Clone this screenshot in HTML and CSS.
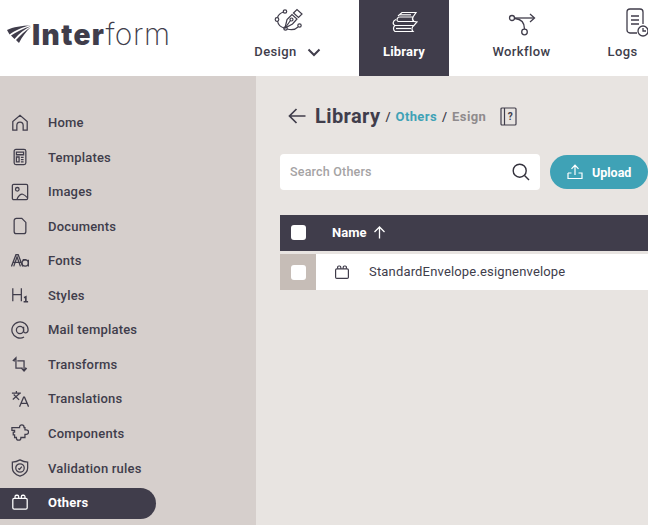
FILE: index.html
```html
<!DOCTYPE html>
<html lang="en">
<head>
<meta charset="utf-8">
<title>Interform Library</title>
<link rel="stylesheet" href="styles.css">
</head>
<body>
<header class="topbar">
  <div class="logo">
    <svg class="logo-mark" width="26" height="20" viewBox="0 0 26 20"><path d="M25 1 C16 2 7 3 1 6 L3.500 10.500 C9 6.500 17 3 25 1Z" fill="#403d4b"/><path d="M25 2 C17 4.500 10 8 5 11.500 L8.500 15 C13 9.500 19 5 25 2Z" fill="#403d4b"/><path d="M25 3 C19 7 14 11.500 10 16 L13 19 C16 13 20 7.500 25 3Z" fill="#403d4b"/></svg>
    <span class="logo-text"><b>Inter</b>form</span>
  </div>
  <nav class="topnav">
    <a class="tab tab-design">
      <svg width="32" height="30" viewBox="0 0 32 30" fill="none" stroke="#403d4b" stroke-width="1.200"><path d="M13 20 L15 11.500 L20 6.500 L25 11 L20.500 16Z"/><path d="M21.500 5 L25 1.500 L30 6 L26.500 9.500Z"/><circle cx="19.500" cy="11.500" r="1.500"/><path d="M13 20 L18.500 12.500"/><path d="M11.500 4 C8 5 6 8 5.500 9.500"/><path d="M5.500 13 C6 16 8.500 19 12 20"/><path d="M15 21 C20 22.500 24 21 26 19"/><circle cx="13" cy="3.500" r="1.700"/><circle cx="5" cy="11.500" r="1.800"/><circle cx="13.500" cy="20.500" r="1.700"/><circle cx="27.500" cy="17.500" r="1.700"/></svg>
      <span class="tab-label">Design <svg class="chev" width="14" height="9" viewBox="0 0 14 9" fill="none" stroke="#403d4b" stroke-width="2"><path d="M1.500 1.500 L7 7 L12.500 1.500"/></svg></span>
    </a>
    <a class="tab tab-active">
      <svg width="30" height="30" viewBox="0 0 30 30" fill="none" stroke="#fff" stroke-width="1.200"><path d="M9 6 L13 2.500 H27 L24 7 H11 C8 7 7 10 9 11.500"/><path d="M11 4.800 H22"/><path d="M24 7 C23 9 23.500 10.500 25 11.500 H9"/><path d="M7 9.500 C4 10.500 3 14 6 15.500 H25 L28 12 L25 11.500"/><path d="M6 15.500 C4 17 4 20 6 21.500 H24 C22.500 20 22.500 17 25 15.500"/><path d="M7 18.500 H22"/></svg>
      <span class="tab-label">Library</span>
    </a>
    <a class="tab tab-workflow">
      <svg width="30" height="30" viewBox="0 0 30 30" fill="none" stroke="#403d4b" stroke-width="1.300"><circle cx="5" cy="8" r="2.500"/><path d="M7.500 8 H27"/><path d="M23 4 L27.500 8 L23 12"/><path d="M8 8.500 C14 9 17.500 12 17.500 19"/><circle cx="17.500" cy="22" r="2.800"/></svg>
      <span class="tab-label">Workflow</span>
    </a>
    <a class="tab tab-logs">
      <svg class="logs-ico" width="30" height="30" viewBox="0 0 30 30" fill="none" stroke="#403d4b" stroke-width="1.300"><path d="M14 25 H7 A3 3 0 0 1 4 22 V4 A3 3 0 0 1 7 1 H17 A3 3 0 0 1 20 4 V16"/><path d="M8 8 H16 M8 12 H16 M8 16 H16"/><circle cx="20" cy="23" r="5"/><path d="M20 20 V23 H23"/></svg>
      <span class="tab-label">Logs <svg class="chev" width="14" height="9" viewBox="0 0 14 9" fill="none" stroke="#403d4b" stroke-width="2"><path d="M1.500 1.500 L7 7 L12.500 1.500"/></svg></span>
    </a>
  </nav>
</header>
<div class="body">
  <aside class="sidebar">
    <a class="item"><span class="ico"><svg viewBox="0 0 20 20"><path d="M2 18 V8.500 L10 1.500 L18 8.500 V18 H13.500 V12.500 A3.500 3.500 0 0 0 6.500 12.500 V18Z"/></svg></span>Home</a>
    <a class="item"><span class="ico"><svg viewBox="0 0 20 20"><rect x="3.500" y="1.500" width="13" height="17" rx="2"/><path d="M6 4.500 H14 V7.500 H6Z M6 10 H9 V15.500 H6Z M11 10.500 H14 M11 13 H14 M11 15.500 H14"/></svg></span>Templates</a>
    <a class="item"><span class="ico"><svg viewBox="0 0 20 20"><rect x="1.500" y="1.500" width="17" height="17" rx="1.500"/><circle cx="7" cy="7" r="2"/><path d="M6.500 18.500 C8 14 11 12 13 12.500 C15 13 17 15 18.500 16.500"/></svg></span>Images</a>
    <a class="item"><span class="ico"><svg viewBox="0 0 20 20"><path d="M12 1.500 H6 A2.500 2.500 0 0 0 3.500 4 V16 A2.500 2.500 0 0 0 6 18.500 H14 A2.500 2.500 0 0 0 16.500 16 V6Z"/></svg></span>Documents</a>
    <a class="item"><span class="ico"><svg viewBox="0 0 20 20"><path d="M0.500 16 L5.500 3 H8 L13 16 M2.500 11.500 H11 M3 16 L6.700 5.500 L10.500 16"/><circle cx="15.800" cy="12.300" r="3.500"/><path d="M19.300 8.500 V16 M13 8.500 H17"/></svg></span>Fonts</a>
    <a class="item"><span class="ico"><svg viewBox="0 0 20 20"><path d="M2 2.500 V17 M11.500 2.500 V17 M2 9.500 H11.500"/><path class="bold" d="M14.500 13 L16.500 12 V17.500 M14 17.500 H19"/></svg></span>Styles</a>
    <a class="item"><span class="ico"><svg viewBox="0 0 20 20"><circle cx="10" cy="10" r="4"/><path d="M14 6.500 V11 C14 14.500 19 13.500 19 10 A9 9 0 1 0 14.500 17.800"/></svg></span>Mail templates</a>
    <a class="item"><span class="ico"><svg viewBox="0 0 20 20"><path d="M2 6.500 L5.500 3 L5.500 14.500 H13 M3 6.500 H4.500 M7 6.500 H14.500 V17 M11.500 14.500 L14.500 17.800 L17.500 14.500 M17 14.500 H15.500"/></svg></span>Transforms</a>
    <a class="item"><span class="ico"><svg viewBox="0 0 20 20"><path d="M1 3.500 H11 M6 1 V3.500 M2 10.500 L9.500 4 M3 5 L9 11 M19.500 18.500 L15 8 H14 L9.500 18.500 M11.500 14.800 H17.500"/></svg></span>Translations</a>
    <a class="item"><span class="ico"><svg viewBox="0 0 20 20"><path d="M1 4 H9.500 V3.500 A2.500 2.500 0 0 1 14.500 3.500 V4 H15.500 V6.500 H17 A2.500 2.500 0 0 1 17 11.500 H15.500 V15 H11 V15.500 A2.500 2.500 0 0 1 6 15.500 V15 H4 V12 H2.500 V9 H4 V7 H1Z"/></svg></span>Components</a>
    <a class="item"><span class="ico"><svg viewBox="0 0 20 20"><path d="M10 1 C12.500 2.500 15.500 3.500 18.500 3.500 V10 C18.500 14 14.500 17.500 10 19 C5.500 17.500 1.500 14 1.500 10 V3.500 C4.500 3.500 7.500 2.500 10 1Z"/><circle cx="10" cy="10" r="4.700"/><path d="M8 10.500 L9.500 11.500 L12 8.500"/></svg></span>Validation rules</a>
    <a class="item item-active"><span class="ico"><svg viewBox="0 0 20 20"><rect x="2" y="6" width="16" height="12" rx="1.500"/><path d="M4.500 6 V4 A1.500 1.500 0 0 1 6 2.500 H7 A1.500 1.500 0 0 1 8.500 4 V6 M11.500 6 V4 A1.500 1.500 0 0 1 13 2.500 H14 A1.500 1.500 0 0 1 15.500 4 V6"/></svg></span>Others</a>
  </aside>
  <main class="main">
    <div class="crumbs">
      <svg class="back" width="18" height="16" viewBox="0 0 18 16" fill="none" stroke="#403d4b" stroke-width="1.700"><path d="M17.500 8 H1.500 M8.500 1 L1.500 8 L8.500 15"/></svg>
      <h1 class="title">Library</h1>
      <span class="sep">/</span><a class="crumb-link">Others</a><span class="sep">/</span><span class="crumb-now">Esign</span>
      <svg class="help" width="17" height="19" viewBox="0 0 17 19" fill="none" stroke="#403d4b" stroke-width="1.200"><rect x="1" y="1" width="15" height="17" rx="1"/><path d="M4.500 1 V18"/><text x="10.200" y="13" class="help-q">?</text></svg>
    </div>
    <div class="tools">
      <div class="search">
        <span class="placeholder">Search Others</span>
        <svg width="18" height="18" viewBox="0 0 18 18" fill="none" stroke="#33313c" stroke-width="1.400"><circle cx="7.700" cy="7.700" r="6.500"/><path d="M12.500 12.500 L17 17"/></svg>
      </div>
      <button class="upload" type="button">
        <svg width="16" height="16" viewBox="0 0 16 16" fill="none" stroke="#fff" stroke-width="1.200"><path d="M8 11 V1.500 M4.500 4.800 L8 1.200 L11.500 4.800 M1 9 V14.500 H15 V9 H11.500 M1 9 H4.500"/></svg>
        Upload
      </button>
    </div>
    <div class="table">
      <div class="thead">
        <span class="cell-check"><span class="check"></span></span>
        <span class="th-name">Name</span>
        <svg width="13" height="13" viewBox="0 0 13 13" fill="none" stroke="#fff" stroke-width="1.300"><path d="M6.500 12.500 V1 M1.500 6 L6.500 1 L11.500 6"/></svg>
      </div>
      <div class="trow">
        <span class="cell-check cell-check-row"><span class="check"></span></span>
        <svg class="row-ico" width="16" height="16" viewBox="0 0 20 20" fill="none" stroke="#403d4b" stroke-width="1.500"><rect x="2" y="6" width="16" height="12" rx="1.500"/><path d="M4.500 6 V4 A1.500 1.500 0 0 1 6 2.500 H7 A1.500 1.500 0 0 1 8.500 4 V6 M11.500 6 V4 A1.500 1.500 0 0 1 13 2.500 H14 A1.500 1.500 0 0 1 15.500 4 V6"/></svg>
        <span class="filename">StandardEnvelope.esignenvelope</span>
      </div>
    </div>
  </main>
</div>
</body>
</html>
```
FILE: styles.css
```css
* { box-sizing: border-box; }
html, body { margin: 0; height: 100%; overflow: hidden; }
body {
  width: 648px;
  height: 525px;
  font-family: Roboto, "Liberation Sans", sans-serif;
  color: #403d4b;
  background: #e8e4e1;
}
.topbar {
  height: 76px;
  background: #fff;
  display: flex;
  overflow: hidden;
}
.logo {
  width: 242px;
  padding-left: 6px;
  display: flex;
  align-items: center;
  flex: none;
  padding-bottom: 8px;
}
.logo-mark { flex: none; }
.logo-text {
  font-family: Inter, Roboto, sans-serif;
  font-size: 30px;
  font-weight: 200;
  letter-spacing: 0.5px;
  color: #403d4b;
  line-height: 1;
}
.logo-text b { font-size: 28px; font-weight: 900; letter-spacing: 1.4px; }
.topnav { display: flex; flex: none; }
.tab {
  height: 76px;
  display: flex;
  flex-direction: column;
  align-items: center;
  padding-top: 8px;
  flex: none;
  gap: 6px;
}
.tab svg { flex: none; }
.tab-design { width: 117px; padding-right: 26px; }
.tab-active { width: 90px; background: #403d4b; color: #fff; padding-top: 10px; gap: 4px; }
.tab-workflow { width: 145px; padding-top: 10px; gap: 4px; }
.tab-logs { width: 81px; }
.logs-ico { margin-left: 6px; }
.tab-label {
  font-size: 13px;
  font-weight: 500;
  letter-spacing: 0.4px;
  line-height: 16px;
  display: flex;
  align-items: center;
  white-space: nowrap;
}
.tab-active .tab-label { font-weight: 700; letter-spacing: 0.2px; }
.chev { margin-left: 10px; }
.body { display: flex; height: 449px; }
.sidebar {
  width: 256px;
  flex: none;
  background: #d6cfcc;
  padding-top: 29.3px;
  display: flex;
  flex-direction: column;
}
.item {
  width: 156px;
  height: 34.55px;
  flex: none;
  display: flex;
  align-items: center;
  font-size: 13px;
  font-weight: 500;
  letter-spacing: 0.2px;
  color: #403d4b;
  border-radius: 0 16px 16px 0;
}
.ico {
  width: 48px;
  padding-left: 11px;
  flex: none;
  display: flex;
}
.ico svg {
  width: 18px;
  height: 18px;
  fill: none;
  stroke: #403d4b;
  stroke-width: 1.400;
}
.ico .bold { stroke-width: 1.800; }
.item-active {
  background: #403d4b;
  color: #fff;
  font-weight: 700;
  height: 31px;
  margin-top: 2.65px;
  padding-bottom: 2px;
}
.item-active .ico svg { stroke: #fff; }
.main { flex: 1; padding: 28px 0 0 24px; min-width: 0; }
.crumbs {
  display: flex;
  align-items: center;
  height: 24px;
}
.back { margin-left: 8px; flex: none; }
.title {
  margin: 0 0 0 9px;
  font-size: 20px;
  font-weight: 700;
  letter-spacing: 0.4px;
  color: #403d4b;
}
.sep { font-size: 13px; margin: 0 5px; font-weight: 500; }
.crumb-link { font-size: 13px; font-weight: 700; color: #3fa2b6; letter-spacing: 0.4px; }
.crumb-now { font-size: 13px; font-weight: 700; color: #8f8b8d; letter-spacing: 0.4px; }
.help { margin-left: 14px; flex: none; }
.help-q { font-family: Roboto, sans-serif; font-size: 10px; font-weight: 700; fill: #403d4b; stroke: none; text-anchor: middle; }
.tools {
  display: flex;
  align-items: center;
  gap: 10px;
  margin-top: 26px;
  width: 392px;
}
.search {
  width: 260px;
  height: 36px;
  flex: none;
  background: #fff;
  border-radius: 4px;
  display: flex;
  align-items: center;
  justify-content: space-between;
  padding: 0 10px;
}
.placeholder { font-size: 12.500px; font-weight: 500; color: #a5a3a4; letter-spacing: 0.2px; padding-bottom: 2px; }
.upload {
  width: 98px;
  height: 34px;
  flex: none;
  border: 0;
  border-radius: 17px;
  background: #3fa2b6;
  color: #fff;
  font-family: Roboto, sans-serif;
  font-size: 12.500px;
  font-weight: 700;
  display: flex;
  align-items: center;
  gap: 9px;
  padding: 0 0 0 17px;
  margin: 0;
  white-space: nowrap;
}
.table { margin-top: 25px; width: 368px; }
.thead {
  height: 36px;
  background: #403d4b;
  color: #fff;
  display: flex;
  align-items: center;
}
.cell-check {
  width: 36px;
  height: 36px;
  flex: none;
  display: flex;
  align-items: center;
  justify-content: center;
}
.cell-check-row { background: #c6bdb7; }
.check { width: 15px; height: 15px; background: #fff; border-radius: 3px; margin-bottom: 2px; }
.cell-check-row .check { margin-bottom: 0; }
.th-name { font-size: 13px; font-weight: 700; margin-left: 16px; margin-right: 7px; padding-bottom: 2px; }
.thead svg { margin-bottom: 2px; }
.trow {
  height: 36px;
  margin-top: 3px;
  background: #fff;
  display: flex;
  align-items: center;
}
.row-ico { margin-left: 18px; flex: none; }
.filename { margin-left: 19px; font-size: 13px; letter-spacing: 0.17px; color: #403d4b; white-space: nowrap; padding-bottom: 2px; }
```
